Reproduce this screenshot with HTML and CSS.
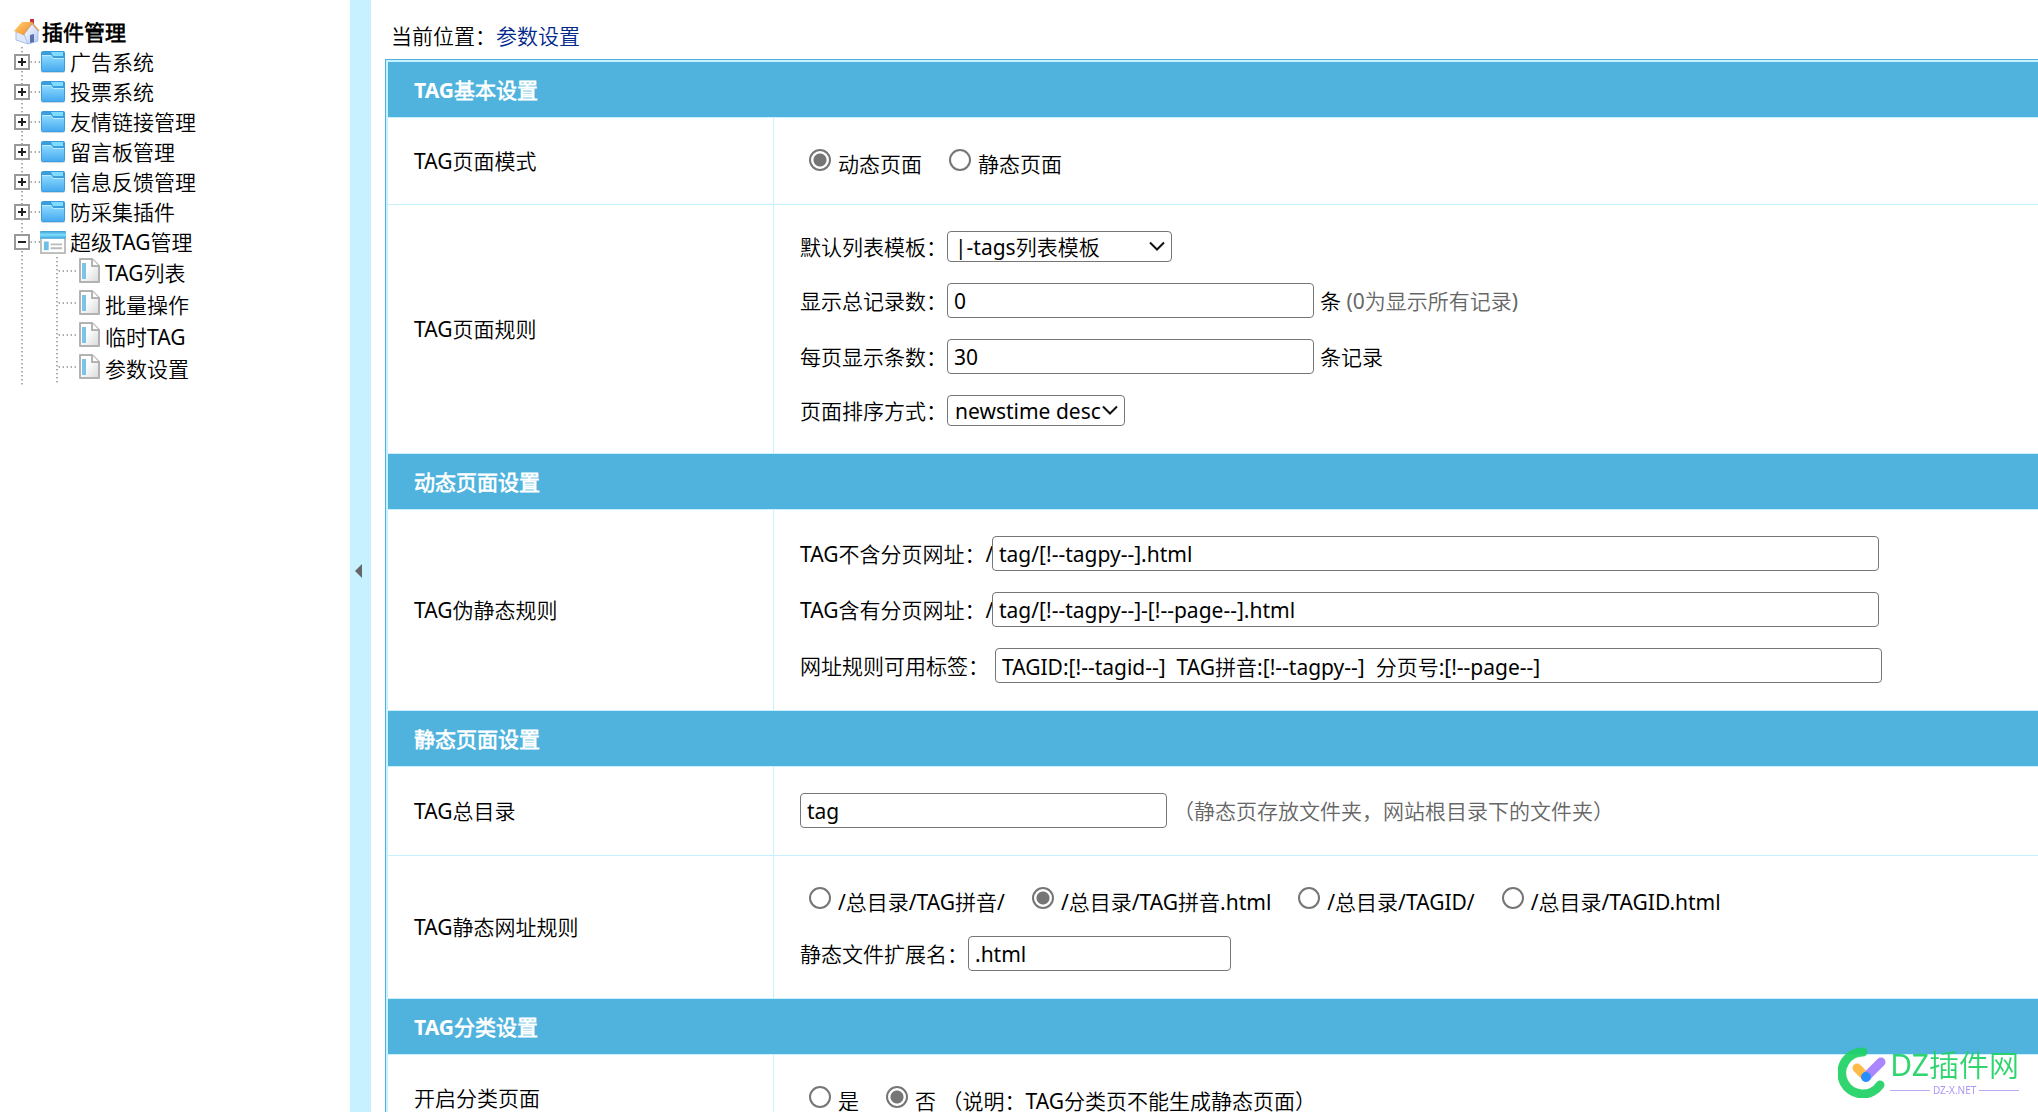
FILE: index.html
```html
<!DOCTYPE html>
<html lang="zh-CN">
<head>
<meta charset="utf-8">
<title>参数设置</title>
<link rel="stylesheet" href="styles.css">
</head>
<body>
<svg class="defs" aria-hidden="true">
  <defs>
    <linearGradient id="gFolder" x1="0" y1="0" x2="0" y2="1"><stop offset="0" stop-color="#8fdcff"/><stop offset="1" stop-color="#47aaf0"/></linearGradient>
    <linearGradient id="gBack" x1="0" y1="0" x2="0" y2="1"><stop offset="0" stop-color="#3a9ddb"/><stop offset="1" stop-color="#3f9ee0"/></linearGradient>
    <linearGradient id="gBar" x1="0" y1="0" x2="0" y2="1"><stop offset="0" stop-color="#3a9bd6"/><stop offset=".5" stop-color="#7fe0fb"/><stop offset="1" stop-color="#3a9fdc"/></linearGradient>
    <linearGradient id="gPage" x1="0" y1="0" x2="1" y2="1"><stop offset=".4" stop-color="#fff"/><stop offset="1" stop-color="#d8d8d8"/></linearGradient>
    <linearGradient id="gRoof" x1="0" y1="0" x2="1" y2="1"><stop offset="0" stop-color="#ffd27a"/><stop offset="1" stop-color="#f58a1e"/></linearGradient>
    <linearGradient id="gWall" x1="0" y1="0" x2="1" y2="1"><stop offset="0" stop-color="#ffffff"/><stop offset="1" stop-color="#b4c9f5"/></linearGradient>
    <symbol id="folder" viewBox="0 0 26 24">
      <rect x="1" y="2" width="24" height="21" rx="2" fill="#9db7c6" opacity=".5"/>
      <rect x="1" y="1" width="24" height="21" rx="2" fill="url(#gBack)"/>
      <path d="M11 2h12v4H13z" fill="#7fdcff"/>
      <path d="M2 5h9l2 3h11v13H2z" fill="url(#gFolder)"/>
      <path d="M2 5.500h9l2 3h11" fill="none" stroke="#b5eaff"/>
    </symbol>
    <symbol id="window" viewBox="0 0 27 25">
      <rect x="1" y="4" width="25" height="20" fill="#fff" stroke="#bdbdbd" stroke-width="2"/>
      <rect x="0" y="1" width="27" height="8" rx="1" fill="url(#gBar)"/>
      <rect x="4" y="12" width="5" height="9" fill="#6fbde8"/>
      <path d="M11 15h12M11 19h12" stroke="#bbb" stroke-width="2"/>
    </symbol>
    <symbol id="page" viewBox="0 0 22 26">
      <path d="M2 1h12l7 7v16H2z" fill="url(#gPage)" stroke="#b2b2b2" stroke-width="2" stroke-linejoin="round"/>
      <path d="M14 1v7h7" fill="#fff" stroke="#b2b2b2" stroke-width="2"/>
      <rect x="4" y="5" width="4" height="16" fill="#7cc4ee"/>
    </symbol>
    <symbol id="plus" viewBox="0 0 16 16"><rect x="1" y="1" width="14" height="14" fill="#fff" stroke="#999" stroke-width="2"/><path d="M4 8h8M8 4v8" stroke="#222" stroke-width="2"/></symbol>
    <symbol id="minus" viewBox="0 0 16 16"><rect x="1" y="1" width="14" height="14" fill="#fff" stroke="#999" stroke-width="2"/><path d="M4 8h8" stroke="#222" stroke-width="2"/></symbol>
    <symbol id="home" viewBox="0 0 26 26">
      <rect x="16" y="0" width="4" height="7" fill="#c8343c"/>
      <path d="M2 13v8l12 4V13z" fill="#dfe8fb" stroke="#a9bfea"/>
      <path d="M10 15 18 5l6 7v10l-10 3z" fill="url(#gWall)" stroke="#a9bfea"/>
      <path d="M16 16l4-1v8l-4 1z" fill="#5a6fae"/>
      <path d="M0 12 8 3h10L9 16z" fill="url(#gRoof)"/>
      <path d="M9 16 18 4l7 8" fill="none" stroke="#e3a263" stroke-width="1.500"/>
    </symbol>
    <symbol id="chevron" viewBox="0 0 16 10"><path d="M1 1.500l7 7 7-7" fill="none" stroke="#111" stroke-width="2"/></symbol>
  </defs>
</svg>

<div class="frame">
  <nav class="sidebar" aria-label="插件管理">
    <a class="root" href="#"><svg class="ico-home"><use href="#home"/></svg>插件管理</a>
    <ul class="tree">
      <li><a class="node" href="#"><svg class="box"><use href="#plus"/></svg><i class="dash"></i><svg class="ico"><use href="#folder"/></svg>广告系统</a></li>
      <li><a class="node" href="#"><svg class="box"><use href="#plus"/></svg><i class="dash"></i><svg class="ico"><use href="#folder"/></svg>投票系统</a></li>
      <li><a class="node" href="#"><svg class="box"><use href="#plus"/></svg><i class="dash"></i><svg class="ico"><use href="#folder"/></svg>友情链接管理</a></li>
      <li><a class="node" href="#"><svg class="box"><use href="#plus"/></svg><i class="dash"></i><svg class="ico"><use href="#folder"/></svg>留言板管理</a></li>
      <li><a class="node" href="#"><svg class="box"><use href="#plus"/></svg><i class="dash"></i><svg class="ico"><use href="#folder"/></svg>信息反馈管理</a></li>
      <li><a class="node" href="#"><svg class="box"><use href="#plus"/></svg><i class="dash"></i><svg class="ico"><use href="#folder"/></svg>防采集插件</a></li>
      <li><a class="node" href="#"><svg class="box"><use href="#minus"/></svg><i class="dash"></i><svg class="ico"><use href="#window"/></svg>超级TAG管理</a>
        <ul class="branch">
          <li><a class="leaf" href="#"><i class="dash long"></i><svg class="ico-page"><use href="#page"/></svg>TAG列表</a></li>
          <li><a class="leaf" href="#"><i class="dash long"></i><svg class="ico-page"><use href="#page"/></svg>批量操作</a></li>
          <li><a class="leaf" href="#"><i class="dash long"></i><svg class="ico-page"><use href="#page"/></svg>临时TAG</a></li>
          <li><a class="leaf" href="#"><i class="dash long"></i><svg class="ico-page"><use href="#page"/></svg>参数设置</a></li>
        </ul>
      </li>
    </ul>
  </nav>

  <button class="splitter" type="button" aria-label="收起菜单"><svg class="arrow" viewBox="0 0 7 14"><path d="M7 0v14L0 7z" fill="#666"/></svg></button>

  <main class="main">
    <p class="crumb">当前位置：<a href="#">参数设置</a></p>
    <form>
    <table class="settings">
      <colgroup><col class="c-name"><col></colgroup>
      <tbody>
      <tr><th colspan="2">TAG基本设置</th></tr>
      <tr><td>TAG页面模式</td><td><div class="stack">
        <div class="radios">
          <label><input type="radio" name="mode" checked><span>动态页面</span></label>
          <label><input type="radio" name="mode"><span>静态页面</span></label>
        </div></div></td></tr>
      <tr><td>TAG页面规则</td><td><div class="stack">
        <div class="line"><label for="tpl">默认列表模板：</label><span class="pick"><select id="tpl" class="w-tpl"><option>|-tags列表模板</option></select><svg class="chev"><use href="#chevron"/></svg></span></div>
        <div class="line"><label for="total">显示总记录数：</label><input type="text" id="total" class="w-mid" value="0"><span class="after">条 <span class="note">(0为显示所有记录)</span></span></div>
        <div class="line"><label for="per">每页显示条数：</label><input type="text" id="per" class="w-mid" value="30"><span class="after">条记录</span></div>
        <div class="line"><label for="order">页面排序方式：</label><span class="pick"><select id="order" class="w-order"><option>newstime desc</option></select><svg class="chev"><use href="#chevron"/></svg></span></div>
      </div></td></tr>
      <tr><th colspan="2">动态页面设置</th></tr>
      <tr><td>TAG伪静态规则</td><td><div class="stack">
        <div class="line"><label class="l-url" for="u1">TAG不含分页网址：/</label><input type="text" id="u1" class="w-long" value="tag/[!--tagpy--].html"></div>
        <div class="line"><label class="l-url" for="u2">TAG含有分页网址：/</label><input type="text" id="u2" class="w-long" value="tag/[!--tagpy--]-[!--page--].html"></div>
        <div class="line"><label class="l-tags" for="u3">网址规则可用标签：</label><input type="text" id="u3" class="w-long" value="TAGID:[!--tagid--]&nbsp; TAG拼音:[!--tagpy--]&nbsp; 分页号:[!--page--]"></div>
      </div></td></tr>
      <tr><th colspan="2">静态页面设置</th></tr>
      <tr><td><label for="dir">TAG总目录</label></td><td><div class="stack">
        <div class="line"><input type="text" id="dir" class="w-mid" value="tag"><span class="after note">（静态页存放文件夹，网站根目录下的文件夹）</span></div>
      </div></td></tr>
      <tr><td>TAG静态网址规则</td><td><div class="stack">
        <div class="radios">
          <label><input type="radio" name="rule"><span>/总目录/TAG拼音/</span></label>
          <label><input type="radio" name="rule" checked><span>/总目录/TAG拼音.html</span></label>
          <label><input type="radio" name="rule"><span>/总目录/TAGID/</span></label>
          <label><input type="radio" name="rule"><span>/总目录/TAGID.html</span></label>
        </div>
        <div class="line"><label for="ext">静态文件扩展名：</label><input type="text" id="ext" class="w-short" value=".html"></div>
      </div></td></tr>
      <tr><th colspan="2">TAG分类设置</th></tr>
      <tr><td>开启分类页面</td><td><div class="stack">
        <div class="radios">
          <label><input type="radio" name="cls"><span>是</span></label>
          <label><input type="radio" name="cls" checked><span>否 （说明：TAG分类页不能生成静态页面）</span></label>
        </div></div></td></tr>
      </tbody>
    </table>
    </form>
  </main>
</div>

<div class="mark">
  <svg class="mark-logo" viewBox="0 0 48 52">
    <path d="M25 6A21 21 0 1 0 42 39" fill="none" stroke="#1fd264" stroke-width="9" stroke-linecap="round"/>
    <path d="M19 22l9 9" stroke="#ffb63a" stroke-width="9" stroke-linecap="round"/>
    <path d="M28 31l15-15" stroke="#a37cff" stroke-width="9" stroke-linecap="round"/>
    <circle cx="28" cy="31" r="5" fill="#1484ff"/>
  </svg>
  <div class="mark-text">
    <span class="mark-name">DZ插件网</span>
    <span class="mark-url">DZ-X.NET</span>
  </div>
</div>
</body>
</html>
```
FILE: styles.css
```css
* { box-sizing: border-box; }

body {
  margin: 0;
  background: #fff;
  color: #000;
  font-family: "Noto Sans", "Noto Sans CJK SC DemiLight", "Noto Sans CJK SC Light", "Noto Sans CJK SC", sans-serif;
  font-size: 21px;
  font-weight: 400;
  line-height: 30px;
}

a { color: inherit; text-decoration: none; }
ul { list-style: none; margin: 0; padding: 0; }
.defs { position: absolute; width: 0; height: 0; }

.frame { display: flex; height: 100vh; overflow: hidden; }

/* menu tree */
.sidebar { flex: 0 0 350px; padding: 17px 0 0 14px; white-space: nowrap; }
.root { display: flex; align-items: center; gap: 2px; font-weight: 700; }
.ico-home { width: 26px; height: 26px; }
.tree, .branch {
  background: repeating-linear-gradient(#aaa 0 1px, #ddd 1px 2px, #fff 2px 4px) 7px 0 / 2px 100% no-repeat;
}
.node { display: flex; align-items: center; height: 30px; }
.box { width: 16px; height: 16px; }
.ico { width: 26px; height: 24px; margin-right: 4px; }
.dash {
  width: 10px;
  height: 2px;
  background: repeating-linear-gradient(90deg, #ddd 0 1px, #aaa 1px 2px, #fff 2px 4px);
}
.branch { margin-left: 35px; }
.leaf { display: flex; align-items: center; height: 32px; padding-left: 9px; }
.long { width: 18px; margin: 0 2px 4px 0; }
.ico-page { width: 22px; height: 26px; margin: 0 5px 4px 0; }

.splitter {
  flex: 0 0 21px;
  display: flex;
  align-items: center;
  padding: 30px 5px 0;
  border: 0;
  background: #c8f1ff;
}
.arrow { width: 7px; height: 14px; }

/* settings form */
.main { flex: 1; min-width: 0; padding: 21px 0 0 14px; }
.crumb { margin: 0 0 8px; padding-left: 6px; }
.crumb a { color: #00278c; }

.settings {
  width: 100%;
  table-layout: fixed;
  border-spacing: 0;
  border: solid #4fb3de;
  border-width: 1px 0 0 1px;
  box-shadow: inset 2px 2px #c8f1ff;
  padding: 2px 0 0 2px;
}
.c-name { width: 385px; }
.settings th {
  height: 56px;
  padding: 0 26px;
  background: #4fb3de;
  border-bottom: 1px solid #c8f1ff;
  color: #fff;
  font-weight: 700;
  text-align: left;
}
.settings td { padding: 0 26px; border-bottom: 1px solid #c8f1ff; }
.settings td + td { padding: 26px 26px 27px; border-left: 1px solid #c8f1ff; white-space: nowrap; }

.stack { display: flex; flex-direction: column; gap: 21px; }
.line { display: flex; align-items: center; }
.l-url { flex: 0 0 192px; min-width: 0; }
.l-tags { flex: 0 0 195px; }
.after { margin-left: 6px; }
.note { color: #666; }

input[type="text"], select {
  border: 1px solid #767676;
  border-radius: 4px;
  background: #fff;
  color: #000;
  font: inherit;
}
input[type="text"] { height: 35px; padding: 0 6px; }
.w-short { width: 263px; }
.w-mid { width: 367px; }
.w-long { width: 887px; }

.pick { position: relative; display: flex; }
select { appearance: none; height: 31px; padding: 0 7px; line-height: 28px; }
.w-tpl { width: 225px; }
.w-order { width: 178px; }
.chev { position: absolute; right: 7px; top: 10px; width: 16px; height: 10px; pointer-events: none; }

.radios { display: flex; gap: 27px; height: 33px; padding-left: 9px; }
.radios label { display: flex; align-items: flex-start; gap: 7px; padding-top: 5px; }
.radios input {
  appearance: none;
  width: 22px;
  height: 22px;
  margin: 0;
  border: 2px solid #767676;
  border-radius: 50%;
  background: #fff;
}
.radios input:checked { background: radial-gradient(circle, #767676 6px, #fff 7px); }

/* site mark, laid over the page corner */
.mark { position: fixed; right: 19px; bottom: 14px; display: flex; gap: 4px; align-items: flex-start; opacity: .92; font-weight: 300; }
.mark-logo { width: 48px; height: 52px; }
.mark-text { display: flex; flex-direction: column; }
.mark-name { color: #1fd264; font-size: 30px; font-weight: 400; line-height: 38px; }
.mark-url { display: flex; align-items: center; gap: 3px; color: #a88cf5; font-size: 10px; font-weight: 400; line-height: 12px; }
.mark-url::before, .mark-url::after { content: ""; flex: 1; height: 1px; background: #b9a2f5; }
```
